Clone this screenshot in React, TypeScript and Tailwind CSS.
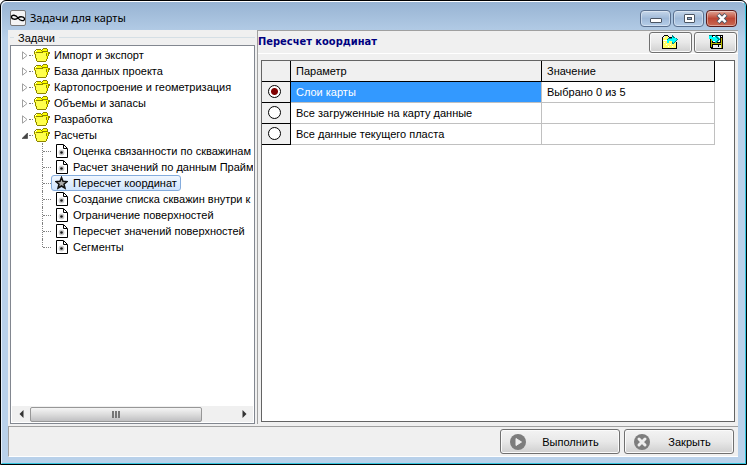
import React from "react";

const folders = ["Импорт и экспорт", "База данных проекта", "Картопостроение и геометризация", "Объемы и запасы", "Разработка", "Расчеты"];
const tasks = [
  "Оценка связанности по скважинам",
  "Расчет значений по данным Прайм",
  "Пересчет координат",
  "Создание списка скважин внутри к",
  "Ограничение поверхностей",
  "Пересчет значений поверхностей",
  "Сегменты",
];
const params = [
  { name: "Слои карты", value: "Выбрано 0 из 5" },
  { name: "Все загруженные на карту данные", value: "" },
  { name: "Все данные текущего пласта", value: "" },
];

function Folder() {
  return (
    <svg width="16" height="14" viewBox="0 0 16 14" className="shrink-0" shapeRendering="crispEdges">
      <path d="M1 4L3 2H7L9 1H14V4H15V6L12 13H2Z" fill="#ffff00" />
      <path d="M0 5H12V13H2Z" fill="#ffff4d" />
      <path d="M0 3h1v3h-1zM1 2h1v1h-1zM2 1h5v1h-5zM7 2h1v1h-1zM8 1h1v1h-1zM9 0h4v1h-4zM13 1h1v3h-1zM8 3h6v1h-6zM2 4h7v1h-7zM1 6h1v4h-1zM2 10h1v3h-1zM3 13h9v1h-9zM14 4h2v2h-2zM14 6h1v2h-1zM13 8h1v3h-1zM12 11h1v2h-1zM12 5h1v3h-1z" fill="#8c8400" />
    </svg>
  );
}

function Doc() {
  return (
    <svg width="13" height="14" viewBox="0 0 13 14" className="shrink-0">
      <path d="M1.500 .5H8.500L12.500 4.500V13.500H1.500Z" fill="#fff" stroke="#000" />
      <path d="M8.500 1V4.500H12" fill="none" stroke="#000" />
      <circle cx="6.500" cy="8.500" r="2.900" fill="#ccc" />
      <circle cx="6.500" cy="8.500" r="1.300" fill="#111" />
    </svg>
  );
}

function Star() {
  return (
    <svg width="13" height="14" viewBox="0 0 13 14" className="shrink-0">
      <path d="M6.5 1.5L8 5.3L12 5.6L9 8.2L10 12.2L6.5 10L3 12.2L4 8.2L1 5.6L5 5.3Z" fill="#aaa" stroke="#111" strokeWidth="1.5" />
    </svg>
  );
}

function OpenIcon() {
  return (
    <svg width="17" height="14" viewBox="0 0 17 14" shapeRendering="crispEdges">
      <path d="M1 3H3V1H6V3H14V13H1Z" fill="#ffff66" />
      <path d="M1 5h4v1h-4zM2 7h1v1h-1zM4 9h1v1h-1zM6 11h1v1h-1zM8 9h1v1h-1zM10 11h1v1h-1z" fill="#fff" />
      <path d="M0 2h1v11h-1zM1 1h1v1h-1zM2 0h4v1h-4zM6 1h1v1h-1zM7 2h3v1h-3zM0 13h15v1h-15zM14 7h1v6h-1z" fill="#000" />
      <path d="M5 8V5H6V4H10V1H11L16 4V5L11 9H10V6H7V8Z" fill="#00ffff" />
      <path d="M10 0h1v1h1v1h1v1h-2v-1h-1zM14 3h1v1h1v1h-1v1h-1v1h-1v1h-1v1h-2v-2h1v1h1v-1h1v-1h1v-1h1v-1h-1zM5 4h1v-1h4v1h-4v1h-1z" fill="#008b8b" />
    </svg>
  );
}

function SaveIcon() {
  return (
    <svg width="14" height="14" viewBox="0 0 14 14" shapeRendering="crispEdges">
      <path d="M1 0H14V14H2L1 13Z" fill="#000" />
      <path d="M2 1H3V12H2zM12 3h1v10h-1zM3 8h9v1h-9z" fill="#b8b800" />
      <path d="M4 1H11V7H4zM12 1h1v1h-1z" fill="#fff" />
      <path d="M4 10H12V13H4Z" fill="#eee" />
      <path d="M9 10h1v2h-1z" fill="#000" />
      <path d="M0 1H3V2H6V1H8L11 4V5L7 8H6V6H3V4H0Z" fill="#00ffff" />
      <path d="M0 0h3v1h-3zM6 0h1v1h1v1h1v1h1v1h1v1h-1v1h-1v1h-1v1h-2v-1h1v-1h1v-1h1v-1h-1v-1h-1v-1h-1z" fill="#008b8b" />
    </svg>
  );
}

function Caption({ kind }: { kind: "min" | "max" | "close" }) {
  const color = kind === "close"
    ? "border-[#591a1a] bg-linear-to-b from-[#dfa597] via-[#bd4634] to-[#c96a55]"
    : "border-[#596f8e] bg-linear-to-b from-[#c6d7ea] via-[#9fb9d8] to-[#b6cee9]";
  return (
    <button aria-label={kind} className={"flex h-[17px] w-[31px] items-center justify-center rounded-sm border shadow-[inset_0_0_0_1px_#ffffff66] " + color}>
      <svg width="14" height="11" viewBox="0 0 14 11">
        {kind === "min" && <rect x="1.500" y="5.500" width="11" height="4" rx=".5" fill="#fff" stroke="#4b5563" />}
        {kind === "max" && <><rect x="2.500" y="1.500" width="10" height="8" rx=".5" fill="#fff" stroke="#4b5563" /><rect x="5.500" y="4.500" width="4" height="2" fill="#8fa9c9" stroke="#4b5563" /></>}
        {kind === "close" && <><path d="M3 1.500L11 9.500M11 1.500L3 9.500" stroke="#4b5563" strokeWidth="4.400" /><path d="M3.400 1.900L10.600 9.100M10.600 1.900L3.400 9.100" stroke="#fff" strokeWidth="2.600" /></>}
      </svg>
    </button>
  );
}

const pushButton = "flex items-center rounded-[3px] border border-[#707070] bg-linear-to-b from-[#f3f3f3] via-[#e8e8e8] to-[#cfcfcf] shadow-[inset_0_0_0_1px_#fafafa]";

export default function App() {
  return (
    <main className="flex h-screen flex-col overflow-hidden rounded-t-md border border-black bg-[#b9d1ea] font-['Liberation_Sans',Arial,sans-serif] text-[11px] leading-4 text-black">
      <div className="flex min-h-0 flex-1 flex-col rounded-t-md border-r border-b border-t border-l border-t-white border-r-[#35c5de] border-b-[#35c5de] border-l-[#e6f0fa] bg-linear-to-b from-[#98b4d3] via-[#b9d1ea] via-8% to-[#b9d1ea] pb-[6px] pl-[6px] pr-[7px]">
        <header className="flex h-7 shrink-0 items-center gap-1 pr-px">
          <svg width="16" height="16" viewBox="0 0 16 16" className="ml-0.5 mt-1">
            <rect x=".5" y=".5" width="15" height="15" rx="1.5" fill="#f4f4f4" stroke="#777" />
            <path d="M8 8C6 4.500 1.500 4.500 1.500 7C1.500 9.500 6 10 8 8C10 6 14.500 6.500 14.500 9C14.500 11.500 10 11 8 8Z" fill="none" stroke="#000" strokeWidth="1.3" />
          </svg>
          <h1 className="mt-1 flex-1 font-['Noto_Sans',sans-serif]">Задачи для карты</h1>
          <div className="mt-1 flex gap-0.5"><Caption kind="min" /><Caption kind="max" /><Caption kind="close" /></div>
        </header>
        <div className="flex min-h-0 flex-1 flex-col bg-[#f0f0f0]">
          <div className="flex min-h-0 flex-1 border-b border-[#a0a0a0] pb-0.5">
            <section className="flex w-[249px] shrink-0 flex-col px-0.5">
              <div className="flex h-[15px] shrink-0 items-center gap-1 overflow-hidden">
                <span className="w-1 border-t border-[#d5dfe5]" />
                <h2>Задачи</h2>
                <span className="flex-1 border-t border-[#d5dfe5]" />
              </div>
              <div className="flex min-h-0 flex-1 flex-col border border-[#828790] bg-white p-px">
                <ul className="flex-1 overflow-hidden whitespace-nowrap">
                  {folders.map((f, i) => (
                    <li key={f} className="flex h-4 items-center pl-[10px]">
                      <svg width="6" height="9" viewBox="0 0 6 9" className="shrink-0">
                        {i < 5 ? <path d="M.5 .8L5 4.500L.5 8.200Z" fill="#fff" stroke="#a0a0a0" /> : <path d="M5.500 2V7.500H0Z" fill="#444" stroke="#222" strokeWidth=".5" />}
                      </svg>
                      <span className="mx-px w-[4px] border-t border-dotted border-[#808080]" />
                      <Folder />
                      <span className="ml-1">{f}</span>
                    </li>
                  ))}
                  {tasks.map((t, i) => (
                    <li key={t} className="flex h-4 items-center pl-[30px]">
                      <span className={"w-px shrink-0 border-l border-dotted border-[#808080] " + (i === 6 ? "h-2 self-start" : "h-4")} />
                      <span className="w-2 shrink-0 border-t border-dotted border-[#808080]" />
                      <button className={"flex h-4 items-center gap-[5px] border px-[3px] " + (i === 2 ? "rounded-[3px] border-[#84acdd] bg-linear-to-b from-[#f1f7fe] to-[#cfe4fe]" : "border-transparent")}>
                        {i === 2 ? <Star /> : <Doc />}
                        <span>{t}</span>
                      </button>
                    </li>
                  ))}
                </ul>
                <div className="flex h-4 shrink-0 items-center bg-[#f0f0f0]">
                  <button aria-label="Влево" className="flex w-[18px] justify-center"><svg width="5" height="8" viewBox="0 0 5 8"><path d="M4.500 0V8L.5 4Z" fill="#333" /></svg></button>
                  <div className="flex flex-1">
                    <div className="flex h-[15px] w-[84%] items-center justify-center gap-px rounded-xs border border-[#979797] bg-linear-to-b from-[#f5f5f5] via-[#dcdcdc] to-[#c0c0c2]">
                      <i className="h-[7px] w-0.5 bg-[#777]" /><i className="h-[7px] w-0.5 bg-[#777]" /><i className="h-[7px] w-0.5 bg-[#777]" />
                    </div>
                  </div>
                  <button aria-label="Вправо" className="flex w-[18px] justify-center"><svg width="5" height="8" viewBox="0 0 5 8"><path d="M.5 0V8L4.500 4Z" fill="#333" /></svg></button>
                </div>
              </div>
            </section>
            <section className="flex min-w-0 flex-1 flex-col border-l border-t border-[#a0a0a0]">
              <div className="flex h-[23px] shrink-0 items-center gap-0.5 border-b border-white pr-px">
                <h2 className="flex-1 font-['DejaVu_Sans_Condensed',sans-serif] font-bold text-[#000080]">Пересчет координат</h2>
                <button aria-label="Открыть" className={pushButton + " h-[21px] w-[43px] justify-center"}><OpenIcon /></button>
                <button aria-label="Сохранить" className={pushButton + " h-[21px] w-[43px] justify-center"}><SaveIcon /></button>
              </div>
              <div className="mx-[3px] mt-1.5 mb-0.5 min-h-0 flex-1 border border-[#646464] bg-white">
                <table className="w-[calc(100%-19px)] table-fixed border-separate border-spacing-0 text-left">
                  <colgroup><col className="w-[29px]" /><col /><col className="w-[173px]" /></colgroup>
                  <thead>
                    <tr className="h-[21px] bg-[#f0f0f0]">
                      <td className="border-b border-r border-black p-0" />
                      <th className="border-b border-r border-black py-0 pl-[5px] font-normal">Параметр</th>
                      <th className="border-b border-r border-black py-0 pl-[5px] font-normal">Значение</th>
                    </tr>
                  </thead>
                  <tbody>
                    {params.map((p, i) => (
                      <tr key={p.name} className="h-[21px]">
                        <td className="border-b border-r border-black bg-[#f0f0f0] pt-0 pr-1 pb-0.5 pl-0">
                          <input id={"p" + i} name="param" type="radio" defaultChecked={i === 0} className="mx-auto block size-[13px] appearance-none rounded-full border border-black bg-white checked:bg-[radial-gradient(circle,#800000_0_3px,white_4px)]" />
                        </td>
                        <td className={"border-b border-r border-[#c0c0c0] py-0 pl-[5px] " + (i === 0 ? "bg-[#3399ff] text-white" : "")}><label htmlFor={"p" + i}>{p.name}</label></td>
                        <td className="border-b border-r border-[#c0c0c0] py-0 pl-[5px]">{p.value}</td>
                      </tr>
                    ))}
                  </tbody>
                </table>
              </div>
            </section>
          </div>
          <footer className="flex h-[30px] shrink-0 justify-end gap-1 border-b border-l border-b-white border-l-[#a0a0a0] pt-0.5 pr-1">
            <button className={pushButton + " h-[25px] w-[120px] pl-[9px] pr-1"}>
              <svg width="16" height="16" viewBox="0 0 16 16"><circle cx="8" cy="8" r="8" fill="#7d7d7d" /><path d="M6 4.500L11.500 8L6 11.500Z" fill="#eee" stroke="#eee" strokeLinejoin="round" /></svg>
              <span className="flex-1 text-center">Выполнить</span>
            </button>
            <button className={pushButton + " h-[25px] w-[110px] pl-[9px] pr-1"}>
              <svg width="16" height="16" viewBox="0 0 16 16"><circle cx="8" cy="8" r="8" fill="#7d7d7d" /><path d="M5 5L11 11M11 5L5 11" stroke="#eee" strokeWidth="3" strokeLinecap="round" /></svg>
              <span className="flex-1 text-center">Закрыть</span>
            </button>
          </footer>
        </div>
      </div>
    </main>
  );
}
